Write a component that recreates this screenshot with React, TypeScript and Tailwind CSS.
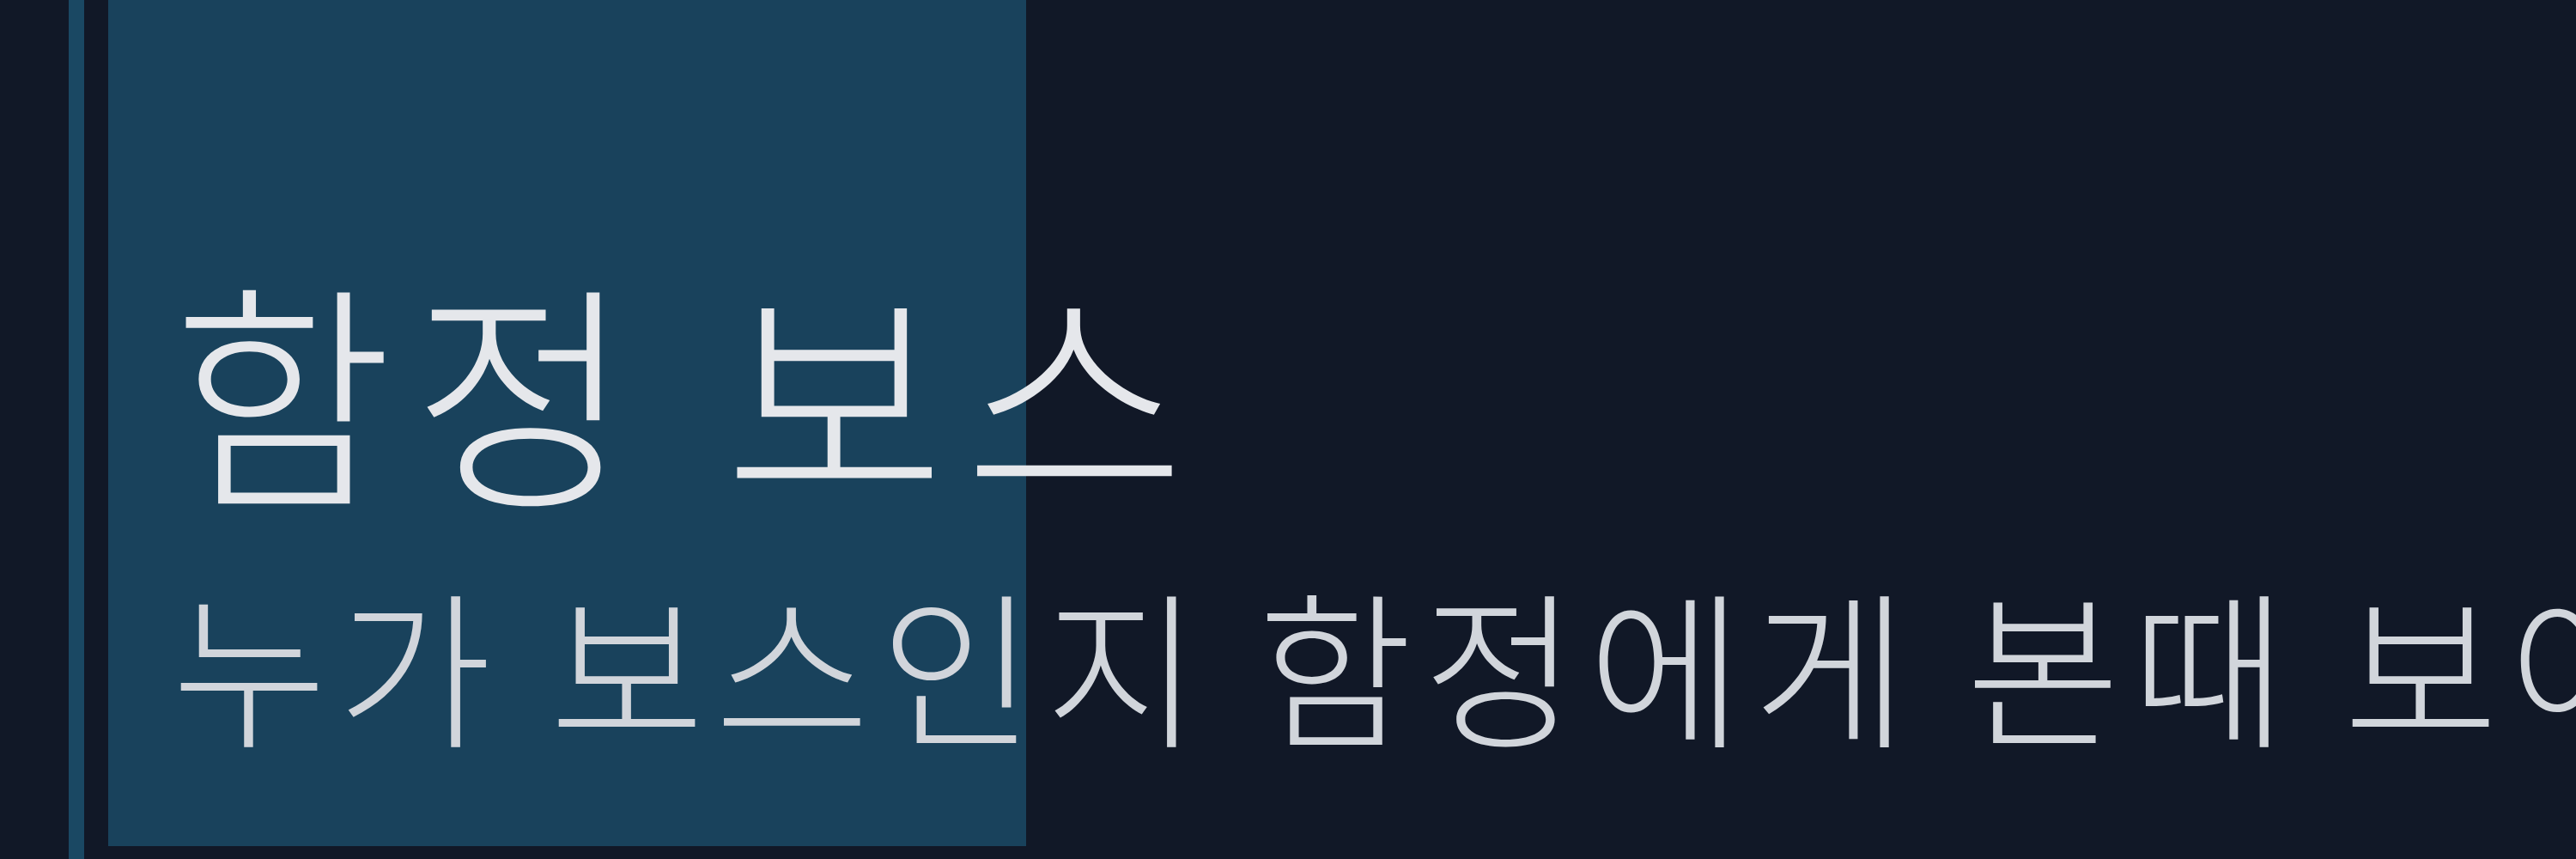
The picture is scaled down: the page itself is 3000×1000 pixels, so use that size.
export default function App() {
  return (
    <div
      className="flex h-[1000px] w-[3000px] overflow-hidden bg-[#111827]"
      style={{ fontFamily: '"Noto Sans CJK KR", "Noto Sans", sans-serif' }}
    >
      <div className="w-[80px] shrink-0" />
      <div className="w-[18px] shrink-0 bg-[#1a4863]" />
      <div className="w-[28px] shrink-0" />
      <div className="flex h-[985px] min-w-0 flex-1 flex-col overflow-hidden bg-[linear-gradient(to_right,#19425c_1069px,transparent_1069px)] pl-[74px] pt-[308px] font-light">
        <div className="whitespace-nowrap text-[280px] leading-none tracking-[22px] text-[#e5e7eb]">함정 보스</div>
        <div className="mt-[84px] whitespace-nowrap text-[196px] leading-none tracking-[12px] text-[#d1d5db]">
          누가 보스인지 함정에게 본때 보여주세요
        </div>
      </div>
    </div>
  );
}
